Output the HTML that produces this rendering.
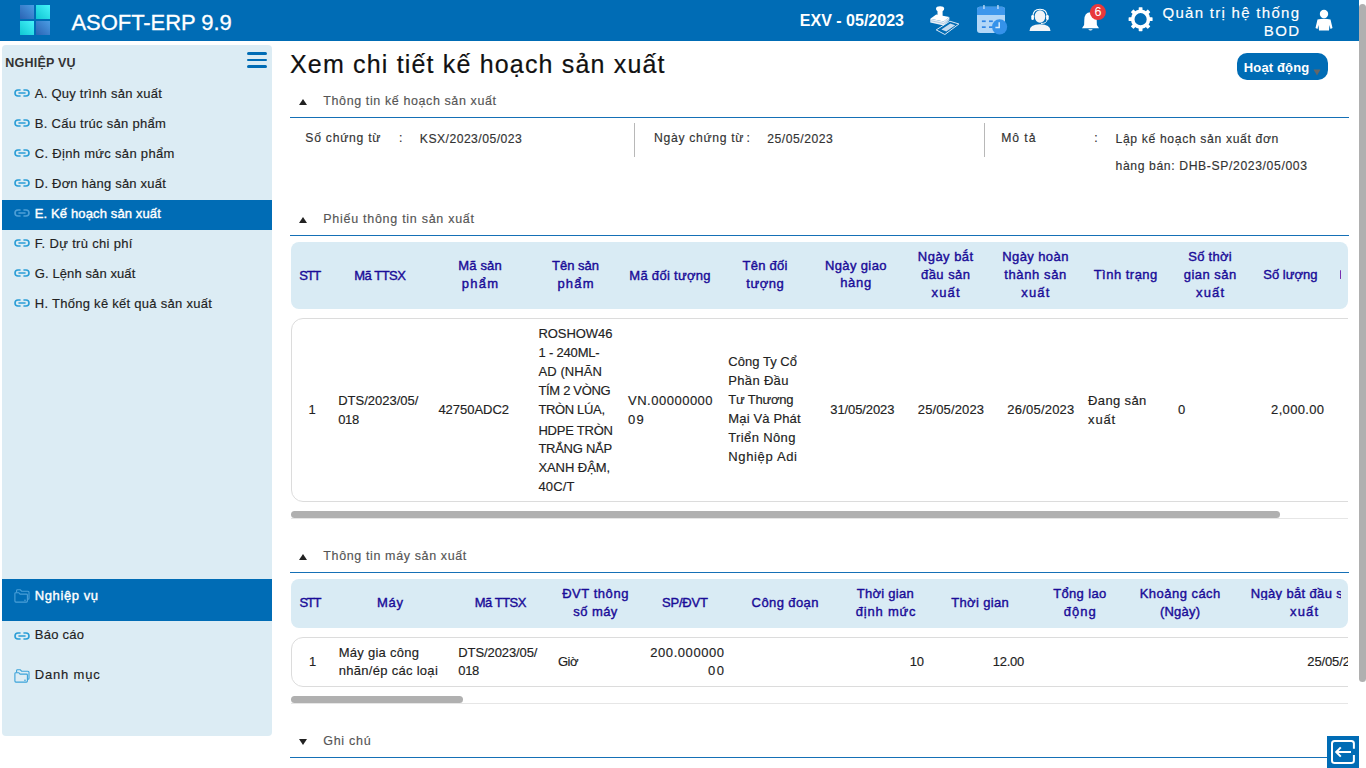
<!DOCTYPE html>
<html><head><meta charset="utf-8">
<style>
*{margin:0;padding:0;box-sizing:border-box}
html,body{width:1366px;height:768px;overflow:hidden;background:#fff;font-family:"Liberation Sans",sans-serif;color:#222}
.t{position:absolute;white-space:nowrap;display:block}
.r{position:absolute}
svg{position:absolute;overflow:visible}
</style></head><body>
<!-- header -->
<div class="r" style="left:0;top:0;width:1359px;height:41px;background:#006cb5"></div>
<div class="r" style="left:20px;top:5px;width:14px;height:14px;background:linear-gradient(45deg,#2a63b3,#4b9de4)"></div>
<div class="r" style="left:36px;top:5px;width:14px;height:14px;background:linear-gradient(45deg,#10c6d2,#46f3fa)"></div>
<div class="r" style="left:20px;top:21px;width:14px;height:14px;background:linear-gradient(45deg,#10c6d2,#46f3fa)"></div>
<div class="r" style="left:36px;top:21px;width:14px;height:14px;background:linear-gradient(45deg,#2a63b3,#4b9de4)"></div>

<!-- stamp icon + calendar -->
<svg style="left:925px;top:0px" width="85" height="40" viewBox="0 0 85 40">
  <path d="M12.5 17 L12.5 11.2 Q10.8 10.2 11 8.2 Q11.3 6.2 15.1 6.2 Q18.9 6.2 19.2 8.2 Q19.4 10.2 17.6 11.2 L17.6 17 Z" fill="#fff"/>
  <path d="M5.3 18.7 L11.2 14.6 L24.3 17.1 L18.7 21.5 Z" fill="#fff"/>
  <path d="M5.3 18.7 L18.7 21.5 L24.3 17.1 L24.3 20 L18.7 25.6 L5.3 22.6 Z" fill="#e9f0f7"/>
  <path d="M5.3 20.6 L18.7 23.5 L24.3 19" stroke="#9dbcd9" stroke-width="0.7" fill="none"/>
  <path d="M11.2 29.9 L24.9 21.2 L33.9 24 L19.9 34.5 Z" fill="none" stroke="#d6e6f4" stroke-width="1"/>
  <path d="M16.3 29.6 L25.3 23.6 L30.3 25.2 L21.3 31.6 Z" fill="#c5dbef"/>
  <rect x="52" y="6.8" width="28" height="26.2" rx="3" fill="#b3d7f7"/>
  <path d="M52 15 L52 9.8 Q52 6.8 55 6.8 L77 6.8 Q80 6.8 80 9.8 L80 15 Z" fill="#3d97ec"/>
  <rect x="58.3" y="5" width="1.3" height="4" fill="#c9e3fa"/>
  <rect x="72.3" y="5" width="1.3" height="4" fill="#c9e3fa"/>
  <rect x="56.9" y="20.4" width="3.8" height="1.7" fill="#2f86e6"/><rect x="64" y="20.4" width="3.8" height="1.7" fill="#2f86e6"/>
  <rect x="56.9" y="26.3" width="3.8" height="1.7" fill="#2f86e6"/><rect x="64" y="26.3" width="3.8" height="1.7" fill="#2f86e6"/>
  <circle cx="74.6" cy="26.8" r="7.6" fill="#3592ea"/>
  <path d="M74.2 22.2 L74.2 27.4 L70.4 27.4" stroke="#d6ebfb" stroke-width="1.5" fill="none"/>
</svg>
<!-- support icon -->
<svg style="left:1028px;top:6px" width="24" height="26" viewBox="0 0 24 26">
  <ellipse cx="12" cy="10.5" rx="5.3" ry="6.2" fill="#f2f4f7"/>
  <path d="M4.8 11 Q4.8 3.2 12 3.2 Q19.2 3.2 19.2 11" stroke="#fff" stroke-width="1.1" fill="none"/>
  <rect x="3.3" y="9" width="2.6" height="5" rx="1.3" fill="#fff"/>
  <rect x="18.1" y="9" width="2.6" height="5" rx="1.3" fill="#fff"/>
  <path d="M19 14 Q18.5 17.5 13 17.5" stroke="#fff" stroke-width="0.9" fill="none"/>
  <path d="M1.5 25 Q1.5 18.2 12 18.2 Q22.5 18.2 22.5 25 Z" fill="#f2f4f7"/>
</svg>
<!-- bell -->
<svg style="left:1080px;top:3px" width="30" height="30" viewBox="0 0 30 30">
  <path d="M10.5 9.2 Q4.3 9.5 4.3 17 L4.1 22 L2 25.2 L19 25.2 L16.9 22 L16.7 17 Q16.7 9.5 10.5 9.2 Z" fill="#fff"/>
  <path d="M8.2 26.2 L12.8 26.2 Q10.5 28.6 8.2 26.2 Z" fill="#fff"/>
  <circle cx="17.9" cy="9.1" r="8" fill="#e8383b"/>
  <text x="17.9" y="13.4" font-family="Liberation Sans" font-size="12.5" font-weight="400" fill="#fff" text-anchor="middle">6</text>
</svg>
<!-- gear -->
<svg style="left:1127px;top:6px" width="27" height="27" viewBox="0 0 27 27">
  <g transform="translate(13.6 13.2)" fill="#fff">
    <circle cx="0" cy="0" r="7.9" fill="none" stroke="#fff" stroke-width="3.6"/>
    <rect x="-1.9" y="-12" width="3.8" height="4.5" rx="0.6"/>
    <rect x="-1.9" y="-12" width="3.8" height="4.5" rx="0.6" transform="rotate(45)"/>
    <rect x="-1.9" y="-12" width="3.8" height="4.5" rx="0.6" transform="rotate(90)"/>
    <rect x="-1.9" y="-12" width="3.8" height="4.5" rx="0.6" transform="rotate(135)"/>
    <rect x="-1.9" y="-12" width="3.8" height="4.5" rx="0.6" transform="rotate(180)"/>
    <rect x="-1.9" y="-12" width="3.8" height="4.5" rx="0.6" transform="rotate(225)"/>
    <rect x="-1.9" y="-12" width="3.8" height="4.5" rx="0.6" transform="rotate(270)"/>
    <rect x="-1.9" y="-12" width="3.8" height="4.5" rx="0.6" transform="rotate(315)"/>
  </g>
</svg>
<!-- person -->
<svg style="left:1314px;top:8px" width="20" height="24" viewBox="0 0 20 24">
  <circle cx="10" cy="6" r="4.2" fill="#fff"/>
  <path d="M3.5 11.5 Q10 10 16.5 11.5 L18.5 20 L16.5 21 L15.5 17 L15 22.5 L5 22.5 L4.5 17 L3.5 21 L1.5 20 Z" fill="#fff"/>
</svg>

<!-- page scrollbar -->
<div class="r" style="left:1359px;top:4px;width:7px;height:678px;background:#b0b0b0;border-radius:4px"></div>

<!-- sidebar -->
<div class="r" style="left:2px;top:45px;width:270px;height:691px;background:#dcecf4;border-radius:4px"></div>
<div class="r" style="left:247px;top:52.3px;width:20px;height:2.7px;background:#006cb5;border-radius:2px"></div>
<div class="r" style="left:247px;top:58.6px;width:20px;height:2.7px;background:#006cb5;border-radius:2px"></div>
<div class="r" style="left:247px;top:65px;width:20px;height:2.7px;background:#006cb5;border-radius:2px"></div>
<div class="r" style="left:2px;top:200px;width:270px;height:30px;background:#006cb5"></div>
<div class="r" style="left:2px;top:579px;width:270px;height:42px;background:#006cb5"></div>
<svg style="left:14px;top:89.1px" width="16" height="8" viewBox="0 0 16 8"><path d="M6 1 L4 1 Q1 1 1 4 Q1 7 4 7 L6 7 M10 1 L12 1 Q15 1 15 4 Q15 7 12 7 L10 7 M5 4 L11 4" stroke="#2a9dd6" stroke-width="1.6" fill="none" stroke-linecap="round"/></svg>
<svg style="left:14px;top:119.1px" width="16" height="8" viewBox="0 0 16 8"><path d="M6 1 L4 1 Q1 1 1 4 Q1 7 4 7 L6 7 M10 1 L12 1 Q15 1 15 4 Q15 7 12 7 L10 7 M5 4 L11 4" stroke="#2a9dd6" stroke-width="1.6" fill="none" stroke-linecap="round"/></svg>
<svg style="left:14px;top:149.1px" width="16" height="8" viewBox="0 0 16 8"><path d="M6 1 L4 1 Q1 1 1 4 Q1 7 4 7 L6 7 M10 1 L12 1 Q15 1 15 4 Q15 7 12 7 L10 7 M5 4 L11 4" stroke="#2a9dd6" stroke-width="1.6" fill="none" stroke-linecap="round"/></svg>
<svg style="left:14px;top:179.1px" width="16" height="8" viewBox="0 0 16 8"><path d="M6 1 L4 1 Q1 1 1 4 Q1 7 4 7 L6 7 M10 1 L12 1 Q15 1 15 4 Q15 7 12 7 L10 7 M5 4 L11 4" stroke="#2a9dd6" stroke-width="1.6" fill="none" stroke-linecap="round"/></svg>
<svg style="left:14px;top:209.1px" width="16" height="8" viewBox="0 0 16 8"><path d="M6 1 L4 1 Q1 1 1 4 Q1 7 4 7 L6 7 M10 1 L12 1 Q15 1 15 4 Q15 7 12 7 L10 7 M5 4 L11 4" stroke="#4f9fd6" stroke-width="1.6" fill="none" stroke-linecap="round"/></svg>
<svg style="left:14px;top:239.1px" width="16" height="8" viewBox="0 0 16 8"><path d="M6 1 L4 1 Q1 1 1 4 Q1 7 4 7 L6 7 M10 1 L12 1 Q15 1 15 4 Q15 7 12 7 L10 7 M5 4 L11 4" stroke="#2a9dd6" stroke-width="1.6" fill="none" stroke-linecap="round"/></svg>
<svg style="left:14px;top:269.1px" width="16" height="8" viewBox="0 0 16 8"><path d="M6 1 L4 1 Q1 1 1 4 Q1 7 4 7 L6 7 M10 1 L12 1 Q15 1 15 4 Q15 7 12 7 L10 7 M5 4 L11 4" stroke="#2a9dd6" stroke-width="1.6" fill="none" stroke-linecap="round"/></svg>
<svg style="left:14px;top:299.1px" width="16" height="8" viewBox="0 0 16 8"><path d="M6 1 L4 1 Q1 1 1 4 Q1 7 4 7 L6 7 M10 1 L12 1 Q15 1 15 4 Q15 7 12 7 L10 7 M5 4 L11 4" stroke="#2a9dd6" stroke-width="1.6" fill="none" stroke-linecap="round"/></svg>
<svg style="left:14px;top:588.6px" width="16" height="14" viewBox="0 0 16 14"><path d="M2.6 3.6 L2.6 1.6 Q2.6 0.8 3.4 0.8 L6.3 0.8 L7.6 2.2 L14 2.2 Q15 2.2 15 3.2 L15 9.2 Q15 10.2 14 10.2 L13.4 10.2" stroke="#4a9fd8" stroke-width="1.1" fill="none"/><path d="M0.9 4.6 Q0.9 3.7 1.8 3.7 L4.8 3.7 L6.1 5.1 L12.5 5.1 Q13.4 5.1 13.4 6 L13.4 12.1 Q13.4 13.1 12.4 13.1 L1.9 13.1 Q0.9 13.1 0.9 12.1 Z" stroke="#4a9fd8" stroke-width="1.1" fill="none"/><rect x="10.2" y="10.6" width="1.6" height="1.3" rx="0.6" fill="#4a9fd8"/></svg>
<svg style="left:14px;top:631.5px" width="16" height="8" viewBox="0 0 16 8"><path d="M6 1 L4 1 Q1 1 1 4 Q1 7 4 7 L6 7 M10 1 L12 1 Q15 1 15 4 Q15 7 12 7 L10 7 M5 4 L11 4" stroke="#2a9dd6" stroke-width="1.6" fill="none" stroke-linecap="round"/></svg>
<svg style="left:14px;top:668.8px" width="16" height="14" viewBox="0 0 16 14"><path d="M2.6 3.6 L2.6 1.6 Q2.6 0.8 3.4 0.8 L6.3 0.8 L7.6 2.2 L14 2.2 Q15 2.2 15 3.2 L15 9.2 Q15 10.2 14 10.2 L13.4 10.2" stroke="#3ba3d9" stroke-width="1.1" fill="none"/><path d="M0.9 4.6 Q0.9 3.7 1.8 3.7 L4.8 3.7 L6.1 5.1 L12.5 5.1 Q13.4 5.1 13.4 6 L13.4 12.1 Q13.4 13.1 12.4 13.1 L1.9 13.1 Q0.9 13.1 0.9 12.1 Z" stroke="#3ba3d9" stroke-width="1.1" fill="none"/><rect x="10.2" y="10.6" width="1.6" height="1.3" rx="0.6" fill="#3ba3d9"/></svg>

<!-- main -->
<div class="r" style="left:1237px;top:53px;width:91px;height:27px;background:#006cb5;border-radius:10px"></div>
<svg style="left:1313px;top:69px" width="8" height="7" viewBox="0 0 8 7"><path d="M0.5 0.5 L7.5 0.5 L4 6.5 Z" fill="#666"/></svg>

<!-- section lines -->
<div class="r" style="left:290px;top:117px;width:1059px;height:1px;background:#1570b6"></div>
<div class="r" style="left:290px;top:235px;width:1059px;height:1px;background:#1570b6"></div>
<div class="r" style="left:290px;top:572px;width:1059px;height:1px;background:#1570b6"></div>
<div class="r" style="left:290px;top:757px;width:1037px;height:1px;background:#1570b6"></div>
<!-- triangles -->
<svg style="left:298px;top:98px" width="10" height="8" viewBox="0 0 10 8"><path d="M1 7 L9 7 L5 1 Z" fill="#222"/></svg>
<svg style="left:298px;top:216px" width="10" height="8" viewBox="0 0 10 8"><path d="M1 7 L9 7 L5 1 Z" fill="#222"/></svg>
<svg style="left:298px;top:553px" width="10" height="8" viewBox="0 0 10 8"><path d="M1 7 L9 7 L5 1 Z" fill="#222"/></svg>
<svg style="left:298px;top:738px" width="10" height="8" viewBox="0 0 10 8"><path d="M1 1 L9 1 L5 7 Z" fill="#222"/></svg>

<!-- dividers in info -->
<div class="r" style="left:633.5px;top:123px;width:1px;height:34px;background:#b8b8b8"></div>
<div class="r" style="left:984px;top:123px;width:1px;height:34px;background:#b8b8b8"></div>

<!-- table 1 -->
<div class="r" style="left:291px;top:242px;width:1057px;height:66.5px;background:#d9ebf4;border-radius:8px"></div>
<div class="r" style="left:291px;top:318px;width:1070px;height:183.5px;border:1px solid #dcdcdc;border-radius:12px;clip-path:inset(-2px 13px -2px -2px)"></div>
<div class="r" style="left:291px;top:511px;width:989px;height:7px;background:#b0b0b0;border-radius:4px"></div>
<div class="r" style="left:291px;top:518px;width:1057px;height:1px;background:#e6e6e6"></div>

<!-- table 2 -->
<div class="r" style="left:291px;top:579px;width:1057px;height:49px;background:#d9ebf4;border-radius:8px"></div>
<div class="r" style="left:291px;top:637px;width:1070px;height:49.5px;border:1px solid #dcdcdc;border-radius:12px;clip-path:inset(-2px 13px -2px -2px)"></div>
<div class="r" style="left:291px;top:696px;width:172px;height:6.5px;background:#b0b0b0;border-radius:4px"></div>
<div class="r" style="left:291px;top:703px;width:1057px;height:1px;background:#e6e6e6"></div>

<div class="r" style="left:1339.5px;top:269.5px;width:1.2px;height:9px;background:#7a2fb0;border-radius:1px"></div>
<!-- exit button -->
<div class="r" style="left:1327px;top:736px;width:32px;height:32px;background:#006cb5"></div>
<svg style="left:1327px;top:736px" width="32" height="32" viewBox="0 0 32 32">
  <path d="M26.9 12.8 L26.9 7.5 Q26.9 5 24.4 5 L7.5 5 Q5 5 5 7.5 L5 24.4 Q5 26.9 7.5 26.9 L24.4 26.9 Q26.9 26.9 26.9 24.4 L26.9 19" stroke="#fff" stroke-width="2" fill="none"/>
  <path d="M24 16 L9.5 16 M13.8 11.4 L9.2 16 L13.8 20.6" stroke="#fff" stroke-width="2" fill="none"/>
</svg>

<span class="t" style="left:71.50px;top:12.38px;font-size:22px;line-height:22px;color:#fff;letter-spacing:-0.057px;-webkit-text-stroke:0.3px #fff;">ASOFT-ERP 9.9</span>
<span class="t" style="left:799.80px;top:13.16px;font-size:16px;line-height:16px;color:#fff;font-weight:700;letter-spacing:0.010px;">EXV - 05/2023</span>
<span class="t" style="left:1162.50px;top:5.10px;font-size:15px;line-height:15px;color:#fff;-webkit-text-stroke:0.15px currentColor;letter-spacing:1.286px;">Quản trị hệ thống</span>
<span class="t" style="left:1263.70px;top:23.20px;font-size:15px;line-height:15px;color:#fff;-webkit-text-stroke:0.15px currentColor;letter-spacing:1.492px;">BOD</span>
<span class="t" style="left:5.25px;top:57.42px;font-size:12.5px;line-height:12.5px;color:#333;font-weight:700;letter-spacing:0.219px;">NGHIỆP VỤ</span>
<span class="t" style="left:34.80px;top:87.10px;font-size:13px;line-height:13px;color:#222;-webkit-text-stroke:0.15px currentColor;letter-spacing:0.244px;">A. Quy trình sản xuất</span>
<span class="t" style="left:34.80px;top:117.10px;font-size:13px;line-height:13px;color:#222;-webkit-text-stroke:0.15px currentColor;letter-spacing:0.277px;">B. Cấu trúc sản phẩm</span>
<span class="t" style="left:34.80px;top:147.10px;font-size:13px;line-height:13px;color:#222;-webkit-text-stroke:0.15px currentColor;letter-spacing:0.305px;">C. Định mức sản phẩm</span>
<span class="t" style="left:34.80px;top:177.10px;font-size:13px;line-height:13px;color:#222;-webkit-text-stroke:0.15px currentColor;letter-spacing:0.208px;">D. Đơn hàng sản xuất</span>
<span class="t" style="left:34.80px;top:207.10px;font-size:13px;line-height:13px;color:#fff;-webkit-text-stroke:0.4px currentColor;letter-spacing:0.127px;">E. Kế hoạch sản xuất</span>
<span class="t" style="left:34.80px;top:237.10px;font-size:13px;line-height:13px;color:#222;-webkit-text-stroke:0.15px currentColor;letter-spacing:0.318px;">F. Dự trù chi phí</span>
<span class="t" style="left:34.80px;top:267.10px;font-size:13px;line-height:13px;color:#222;-webkit-text-stroke:0.15px currentColor;letter-spacing:0.099px;">G. Lệnh sản xuất</span>
<span class="t" style="left:34.80px;top:297.10px;font-size:13px;line-height:13px;color:#222;-webkit-text-stroke:0.15px currentColor;letter-spacing:0.274px;">H. Thống kê kết quả sản xuất</span>
<span class="t" style="left:34.80px;top:588.60px;font-size:13px;line-height:13px;color:#fff;-webkit-text-stroke:0.4px currentColor;letter-spacing:0.594px;">Nghiệp vụ</span>
<span class="t" style="left:34.80px;top:628.40px;font-size:13px;line-height:13px;color:#222;-webkit-text-stroke:0.15px currentColor;letter-spacing:0.249px;">Báo cáo</span>
<span class="t" style="left:34.80px;top:668.20px;font-size:13px;line-height:13px;color:#222;-webkit-text-stroke:0.15px currentColor;letter-spacing:0.807px;">Danh mục</span>
<span class="t" style="left:290.00px;top:51.84px;font-size:25px;line-height:25px;color:#111;letter-spacing:1.173px;-webkit-text-stroke:0.2px #111;">Xem chi tiết kế hoạch sản xuất</span>
<span class="t" style="left:1243.80px;top:61.00px;font-size:13px;line-height:13px;color:#fff;font-weight:700;letter-spacing:0.142px;">Hoạt động</span>
<span class="t" style="left:323.30px;top:95.22px;font-size:12.5px;line-height:12.5px;color:#555;-webkit-text-stroke:0.15px currentColor;letter-spacing:0.601px;">Thông tin kế hoạch sản xuất</span>
<span class="t" style="left:323.30px;top:213.42px;font-size:12.5px;line-height:12.5px;color:#555;-webkit-text-stroke:0.15px currentColor;letter-spacing:0.721px;">Phiếu thông tin sản xuất</span>
<span class="t" style="left:323.30px;top:550.22px;font-size:12.5px;line-height:12.5px;color:#555;-webkit-text-stroke:0.15px currentColor;letter-spacing:0.622px;">Thông tin máy sản xuất</span>
<span class="t" style="left:323.30px;top:735.22px;font-size:12.5px;line-height:12.5px;color:#555;-webkit-text-stroke:0.15px currentColor;letter-spacing:0.701px;">Ghi chú</span>
<span class="t" style="left:305.30px;top:131.77px;font-size:12.2px;line-height:12.2px;color:#333;-webkit-text-stroke:0.15px currentColor;letter-spacing:0.739px;">Số chứng từ</span>
<span class="t" style="left:399.00px;top:131.77px;font-size:12.2px;line-height:12.2px;color:#333;-webkit-text-stroke:0.15px currentColor;">:</span>
<span class="t" style="left:419.80px;top:133.47px;font-size:12.2px;line-height:12.2px;color:#333;-webkit-text-stroke:0.15px currentColor;letter-spacing:0.460px;">KSX/2023/05/023</span>
<span class="t" style="left:654.00px;top:131.87px;font-size:12.2px;line-height:12.2px;color:#333;-webkit-text-stroke:0.15px currentColor;letter-spacing:0.678px;">Ngày chứng từ</span>
<span class="t" style="left:746.50px;top:131.87px;font-size:12.2px;line-height:12.2px;color:#333;-webkit-text-stroke:0.15px currentColor;">:</span>
<span class="t" style="left:767.20px;top:133.47px;font-size:12.2px;line-height:12.2px;color:#333;-webkit-text-stroke:0.15px currentColor;letter-spacing:0.522px;">25/05/2023</span>
<span class="t" style="left:1001.20px;top:131.77px;font-size:12.2px;line-height:12.2px;color:#333;-webkit-text-stroke:0.15px currentColor;letter-spacing:0.954px;">Mô tả</span>
<span class="t" style="left:1094.30px;top:131.77px;font-size:12.2px;line-height:12.2px;color:#333;-webkit-text-stroke:0.15px currentColor;">:</span>
<span class="t" style="left:1115.50px;top:132.97px;font-size:12.2px;line-height:12.2px;color:#333;-webkit-text-stroke:0.15px currentColor;letter-spacing:0.638px;">Lập kế hoạch sản xuất đơn</span>
<span class="t" style="left:1115.50px;top:160.17px;font-size:12.2px;line-height:12.2px;color:#333;-webkit-text-stroke:0.15px currentColor;letter-spacing:0.617px;">hàng bán: DHB-SP/2023/05/003</span>
<span class="t" style="left:299.20px;top:268.80px;font-size:13px;line-height:13px;color:#1a0c98;-webkit-text-stroke:0.4px currentColor;letter-spacing:-1.231px;">STT</span>
<span class="t" style="left:354.30px;top:268.80px;font-size:13px;line-height:13px;color:#1a0c98;-webkit-text-stroke:0.4px currentColor;letter-spacing:-0.512px;">Mã TTSX</span>
<span class="t" style="left:458.35px;top:259.30px;font-size:13px;line-height:13px;color:#1a0c98;-webkit-text-stroke:0.4px currentColor;letter-spacing:0.132px;">Mã sản</span>
<span class="t" style="left:461.85px;top:277.00px;font-size:13px;line-height:13px;color:#1a0c98;-webkit-text-stroke:0.4px currentColor;letter-spacing:1.256px;">phẩm</span>
<span class="t" style="left:552.05px;top:259.30px;font-size:13px;line-height:13px;color:#1a0c98;-webkit-text-stroke:0.4px currentColor;letter-spacing:-0.014px;">Tên sản</span>
<span class="t" style="left:557.40px;top:277.00px;font-size:13px;line-height:13px;color:#1a0c98;-webkit-text-stroke:0.4px currentColor;letter-spacing:1.223px;">phẩm</span>
<span class="t" style="left:629.30px;top:268.80px;font-size:13px;line-height:13px;color:#1a0c98;-webkit-text-stroke:0.4px currentColor;letter-spacing:0.297px;">Mã đối tượng</span>
<span class="t" style="left:742.50px;top:258.80px;font-size:13px;line-height:13px;color:#1a0c98;-webkit-text-stroke:0.4px currentColor;letter-spacing:0.271px;">Tên đối</span>
<span class="t" style="left:746.25px;top:276.80px;font-size:13px;line-height:13px;color:#1a0c98;-webkit-text-stroke:0.4px currentColor;letter-spacing:0.547px;">tượng</span>
<span class="t" style="left:824.90px;top:258.60px;font-size:13px;line-height:13px;color:#1a0c98;-webkit-text-stroke:0.4px currentColor;letter-spacing:0.382px;">Ngày giao</span>
<span class="t" style="left:840.20px;top:276.40px;font-size:13px;line-height:13px;color:#1a0c98;-webkit-text-stroke:0.4px currentColor;letter-spacing:0.693px;">hàng</span>
<span class="t" style="left:917.85px;top:250.00px;font-size:13px;line-height:13px;color:#1a0c98;-webkit-text-stroke:0.4px currentColor;letter-spacing:0.465px;">Ngày bắt</span>
<span class="t" style="left:921.00px;top:267.80px;font-size:13px;line-height:13px;color:#1a0c98;-webkit-text-stroke:0.4px currentColor;letter-spacing:0.456px;">đầu sản</span>
<span class="t" style="left:931.50px;top:285.60px;font-size:13px;line-height:13px;color:#1a0c98;-webkit-text-stroke:0.4px currentColor;letter-spacing:1.141px;">xuất</span>
<span class="t" style="left:1002.20px;top:250.00px;font-size:13px;line-height:13px;color:#1a0c98;-webkit-text-stroke:0.4px currentColor;letter-spacing:0.414px;">Ngày hoàn</span>
<span class="t" style="left:1004.30px;top:267.80px;font-size:13px;line-height:13px;color:#1a0c98;-webkit-text-stroke:0.4px currentColor;letter-spacing:0.611px;">thành sản</span>
<span class="t" style="left:1021.30px;top:285.60px;font-size:13px;line-height:13px;color:#1a0c98;-webkit-text-stroke:0.4px currentColor;letter-spacing:1.141px;">xuất</span>
<span class="t" style="left:1093.70px;top:267.80px;font-size:13px;line-height:13px;color:#1a0c98;-webkit-text-stroke:0.4px currentColor;letter-spacing:0.482px;">Tình trạng</span>
<span class="t" style="left:1188.35px;top:250.00px;font-size:13px;line-height:13px;color:#1a0c98;-webkit-text-stroke:0.4px currentColor;letter-spacing:0.253px;">Số thời</span>
<span class="t" style="left:1183.85px;top:267.80px;font-size:13px;line-height:13px;color:#1a0c98;-webkit-text-stroke:0.4px currentColor;letter-spacing:0.449px;">gian sản</span>
<span class="t" style="left:1196.00px;top:285.60px;font-size:13px;line-height:13px;color:#1a0c98;-webkit-text-stroke:0.4px currentColor;letter-spacing:1.141px;">xuất</span>
<span class="t" style="left:1263.30px;top:267.80px;font-size:13px;line-height:13px;color:#1a0c98;-webkit-text-stroke:0.4px currentColor;letter-spacing:0.015px;">Số lượng</span>
<span class="t" style="left:308.50px;top:403.40px;font-size:13px;line-height:13px;color:#222;-webkit-text-stroke:0.15px currentColor;">1</span>
<span class="t" style="left:338.20px;top:394.30px;font-size:13px;line-height:13px;color:#222;-webkit-text-stroke:0.15px currentColor;">DTS/2023/05/</span>
<span class="t" style="left:338.20px;top:413.20px;font-size:13px;line-height:13px;color:#222;-webkit-text-stroke:0.15px currentColor;letter-spacing:-0.352px;">018</span>
<span class="t" style="left:438.40px;top:403.40px;font-size:13px;line-height:13px;color:#222;-webkit-text-stroke:0.15px currentColor;letter-spacing:-0.016px;">42750ADC2</span>
<span class="t" style="left:538.40px;top:327.30px;font-size:13px;line-height:13px;color:#222;-webkit-text-stroke:0.15px currentColor;letter-spacing:-0.044px;">ROSHOW46</span>
<span class="t" style="left:538.40px;top:346.34px;font-size:13px;line-height:13px;color:#222;-webkit-text-stroke:0.15px currentColor;letter-spacing:-0.175px;">1 - 240ML-</span>
<span class="t" style="left:538.40px;top:365.38px;font-size:13px;line-height:13px;color:#222;-webkit-text-stroke:0.15px currentColor;letter-spacing:0.108px;">AD (NHÃN</span>
<span class="t" style="left:538.40px;top:384.42px;font-size:13px;line-height:13px;color:#222;-webkit-text-stroke:0.15px currentColor;letter-spacing:-0.314px;">TÍM 2 VÒNG</span>
<span class="t" style="left:538.40px;top:403.46px;font-size:13px;line-height:13px;color:#222;-webkit-text-stroke:0.15px currentColor;letter-spacing:-0.343px;">TRÒN LÚA,</span>
<span class="t" style="left:538.40px;top:423.50px;font-size:13px;line-height:13px;color:#222;-webkit-text-stroke:0.15px currentColor;letter-spacing:-0.216px;">HDPE TRÒN</span>
<span class="t" style="left:538.40px;top:441.54px;font-size:13px;line-height:13px;color:#222;-webkit-text-stroke:0.15px currentColor;letter-spacing:-0.268px;">TRẮNG NẮP</span>
<span class="t" style="left:538.40px;top:460.58px;font-size:13px;line-height:13px;color:#222;-webkit-text-stroke:0.15px currentColor;letter-spacing:-0.054px;">XANH ĐẬM,</span>
<span class="t" style="left:538.40px;top:479.62px;font-size:13px;line-height:13px;color:#222;-webkit-text-stroke:0.15px currentColor;letter-spacing:0.173px;">40C/T</span>
<span class="t" style="left:628.00px;top:393.90px;font-size:13px;line-height:13px;color:#222;-webkit-text-stroke:0.15px currentColor;letter-spacing:0.508px;">VN.00000000</span>
<span class="t" style="left:628.00px;top:412.80px;font-size:13px;line-height:13px;color:#222;-webkit-text-stroke:0.15px currentColor;letter-spacing:1.331px;">09</span>
<span class="t" style="left:728.30px;top:355.00px;font-size:13px;line-height:13px;color:#222;-webkit-text-stroke:0.15px currentColor;letter-spacing:0.031px;">Công Ty Cổ</span>
<span class="t" style="left:728.30px;top:374.00px;font-size:13px;line-height:13px;color:#222;-webkit-text-stroke:0.15px currentColor;letter-spacing:0.325px;">Phần Đầu</span>
<span class="t" style="left:728.30px;top:393.00px;font-size:13px;line-height:13px;color:#222;-webkit-text-stroke:0.15px currentColor;letter-spacing:-0.211px;">Tư Thương</span>
<span class="t" style="left:728.30px;top:412.00px;font-size:13px;line-height:13px;color:#222;-webkit-text-stroke:0.15px currentColor;letter-spacing:0.147px;">Mại Và Phát</span>
<span class="t" style="left:728.30px;top:431.00px;font-size:13px;line-height:13px;color:#222;-webkit-text-stroke:0.15px currentColor;letter-spacing:0.364px;">Triển Nông</span>
<span class="t" style="left:728.30px;top:450.00px;font-size:13px;line-height:13px;color:#222;-webkit-text-stroke:0.15px currentColor;letter-spacing:0.645px;">Nghiệp Adi</span>
<span class="t" style="left:830.30px;top:403.20px;font-size:13px;line-height:13px;color:#222;-webkit-text-stroke:0.15px currentColor;letter-spacing:-0.098px;">31/05/2023</span>
<span class="t" style="left:917.80px;top:403.20px;font-size:13px;line-height:13px;color:#222;-webkit-text-stroke:0.15px currentColor;letter-spacing:0.125px;">25/05/2023</span>
<span class="t" style="left:1007.30px;top:403.20px;font-size:13px;line-height:13px;color:#222;-webkit-text-stroke:0.15px currentColor;letter-spacing:0.214px;">26/05/2023</span>
<span class="t" style="left:1088.10px;top:394.20px;font-size:13px;line-height:13px;color:#222;-webkit-text-stroke:0.15px currentColor;letter-spacing:0.363px;">Đang sản</span>
<span class="t" style="left:1088.10px;top:413.20px;font-size:13px;line-height:13px;color:#222;-webkit-text-stroke:0.15px currentColor;letter-spacing:0.807px;">xuất</span>
<span class="t" style="left:1178.00px;top:403.20px;font-size:13px;line-height:13px;color:#222;-webkit-text-stroke:0.15px currentColor;">0</span>
<span class="t" style="left:1271.10px;top:403.20px;font-size:13px;line-height:13px;color:#222;-webkit-text-stroke:0.15px currentColor;letter-spacing:0.342px;">2,000.00</span>
<span class="t" style="left:299.50px;top:595.90px;font-size:13px;line-height:13px;color:#1a0c98;-webkit-text-stroke:0.4px currentColor;letter-spacing:-1.331px;">STT</span>
<span class="t" style="left:377.10px;top:595.90px;font-size:13px;line-height:13px;color:#1a0c98;-webkit-text-stroke:0.4px currentColor;letter-spacing:0.669px;">Máy</span>
<span class="t" style="left:474.70px;top:595.90px;font-size:13px;line-height:13px;color:#1a0c98;-webkit-text-stroke:0.4px currentColor;letter-spacing:-0.479px;">Mã TTSX</span>
<span class="t" style="left:562.20px;top:586.90px;font-size:13px;line-height:13px;color:#1a0c98;-webkit-text-stroke:0.4px currentColor;letter-spacing:0.535px;">ĐVT thông</span>
<span class="t" style="left:573.30px;top:604.80px;font-size:13px;line-height:13px;color:#1a0c98;-webkit-text-stroke:0.4px currentColor;letter-spacing:0.419px;">số máy</span>
<span class="t" style="left:662.00px;top:595.90px;font-size:13px;line-height:13px;color:#1a0c98;-webkit-text-stroke:0.4px currentColor;letter-spacing:-0.194px;">SP/ĐVT</span>
<span class="t" style="left:751.60px;top:595.90px;font-size:13px;line-height:13px;color:#1a0c98;-webkit-text-stroke:0.4px currentColor;letter-spacing:0.409px;">Công đoạn</span>
<span class="t" style="left:856.85px;top:587.00px;font-size:13px;line-height:13px;color:#1a0c98;-webkit-text-stroke:0.4px currentColor;letter-spacing:0.265px;">Thời gian</span>
<span class="t" style="left:855.65px;top:605.00px;font-size:13px;line-height:13px;color:#1a0c98;-webkit-text-stroke:0.4px currentColor;letter-spacing:0.809px;">định mức</span>
<span class="t" style="left:951.20px;top:596.00px;font-size:13px;line-height:13px;color:#1a0c98;-webkit-text-stroke:0.4px currentColor;letter-spacing:0.352px;">Thời gian</span>
<span class="t" style="left:1053.20px;top:587.00px;font-size:13px;line-height:13px;color:#1a0c98;-webkit-text-stroke:0.4px currentColor;letter-spacing:0.344px;">Tổng lao</span>
<span class="t" style="left:1063.70px;top:605.00px;font-size:13px;line-height:13px;color:#1a0c98;-webkit-text-stroke:0.4px currentColor;letter-spacing:1.026px;">động</span>
<span class="t" style="left:1139.65px;top:587.00px;font-size:13px;line-height:13px;color:#1a0c98;-webkit-text-stroke:0.4px currentColor;letter-spacing:0.479px;">Khoảng cách</span>
<span class="t" style="left:1160.00px;top:605.00px;font-size:13px;line-height:13px;color:#1a0c98;-webkit-text-stroke:0.4px currentColor;letter-spacing:0.197px;">(Ngày)</span>
<span class="t" style="left:1250.70px;top:587.00px;font-size:13px;line-height:13px;color:#1a0c98;-webkit-text-stroke:0.4px currentColor;letter-spacing:0.350px;width:90.30px;overflow:hidden;">Ngày bắt đầu s</span>
<span class="t" style="left:1290.00px;top:605.00px;font-size:13px;line-height:13px;color:#1a0c98;-webkit-text-stroke:0.4px currentColor;letter-spacing:1.141px;">xuất</span>
<span class="t" style="left:309.00px;top:655.00px;font-size:13px;line-height:13px;color:#222;-webkit-text-stroke:0.15px currentColor;">1</span>
<span class="t" style="left:338.70px;top:645.60px;font-size:13px;line-height:13px;color:#222;-webkit-text-stroke:0.15px currentColor;letter-spacing:0.261px;">Máy gia công</span>
<span class="t" style="left:338.70px;top:664.40px;font-size:13px;line-height:13px;color:#222;-webkit-text-stroke:0.15px currentColor;letter-spacing:0.294px;">nhãn/ép các loại</span>
<span class="t" style="left:458.30px;top:645.60px;font-size:13px;line-height:13px;color:#222;-webkit-text-stroke:0.15px currentColor;letter-spacing:-0.102px;">DTS/2023/05/</span>
<span class="t" style="left:458.30px;top:664.40px;font-size:13px;line-height:13px;color:#222;-webkit-text-stroke:0.15px currentColor;letter-spacing:-0.352px;">018</span>
<span class="t" style="left:558.00px;top:654.90px;font-size:13px;line-height:13px;color:#222;-webkit-text-stroke:0.15px currentColor;letter-spacing:-0.516px;">Giờ</span>
<span class="t" style="left:650.30px;top:645.70px;font-size:13px;line-height:13px;color:#222;-webkit-text-stroke:0.15px currentColor;letter-spacing:0.557px;">200.000000</span>
<span class="t" style="left:708.00px;top:664.40px;font-size:13px;line-height:13px;color:#222;-webkit-text-stroke:0.15px currentColor;letter-spacing:1.531px;">00</span>
<span class="t" style="left:909.63px;top:655.30px;font-size:13px;line-height:13px;color:#222;-webkit-text-stroke:0.15px currentColor;">10</span>
<span class="t" style="left:992.80px;top:655.30px;font-size:13px;line-height:13px;color:#222;-webkit-text-stroke:0.15px currentColor;letter-spacing:-0.287px;">12.00</span>
<span class="t" style="left:1307.30px;top:655.30px;font-size:13px;line-height:13px;color:#222;-webkit-text-stroke:0.15px currentColor;letter-spacing:-0.120px;width:40.70px;overflow:hidden;">25/05/2023</span>
</body></html>
